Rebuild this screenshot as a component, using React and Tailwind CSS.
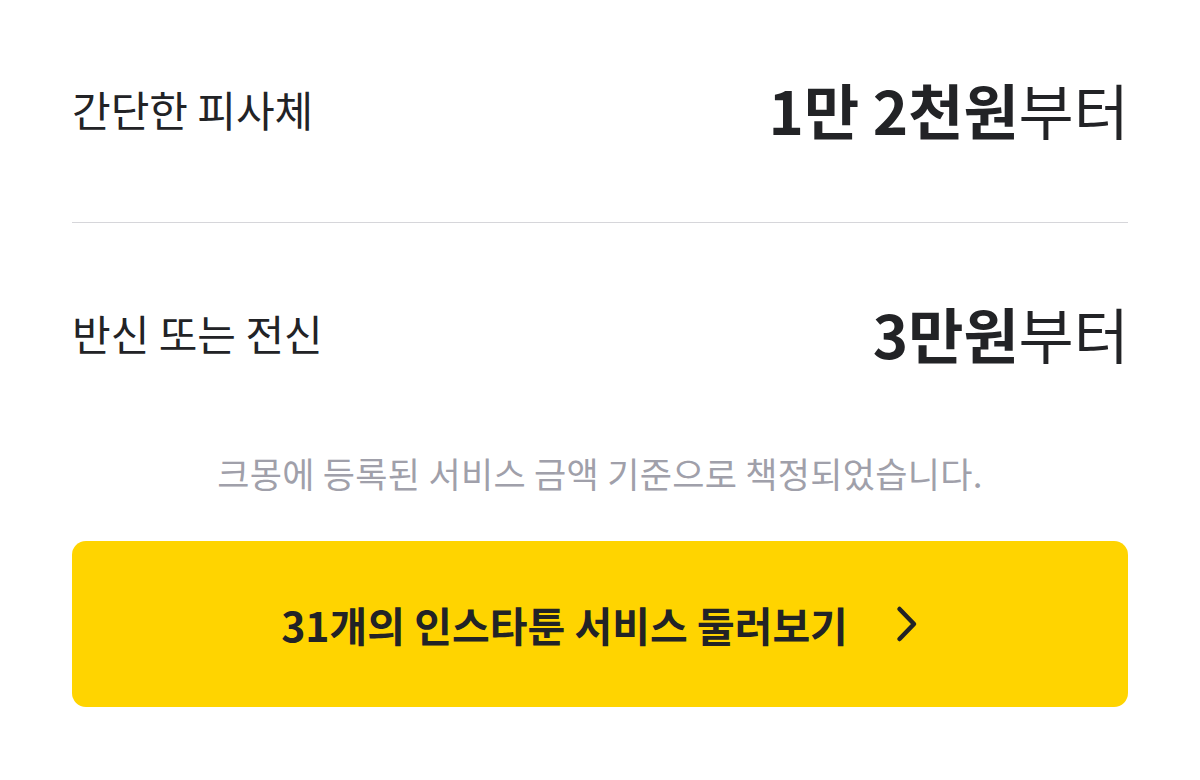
const prices = [
    { label: '간단한 피사체', amount: '1만 2천원' },
    { label: '반신 또는 전신', amount: '3만원' },
]

export default function App() {
    return (
        <div className="w-[1200px] h-[780px] bg-white px-[72px] text-[#222326] font-['Noto_Sans_CJK_KR','Noto_Sans',sans-serif]">
            {prices.map((p, i) => (
                <div
                    key={p.label}
                    className={`h-[223px] flex items-center justify-between ${i === 0 ? 'border-b border-[#d6d6da]' : ''}`}
                >
                    <span className="text-[42px] leading-none -mt-[4px]">{p.label}</span>
                    <span className="text-[60px] leading-none -mr-[1px] -mt-[4px]">
                        <b className="font-bold">{p.amount}</b>
                        <span className="font-normal">부터</span>
                    </span>
                </div>
            ))}

            <p className="mt-[9px] text-center text-[35px] tracking-[0.3px] leading-none text-[#a0a0aa]">
                크몽에 등록된 서비스 금액 기준으로 책정되었습니다.
            </p>

            <button className="mt-[51px] w-full h-[166px] rounded-[14px] bg-[#ffd400] flex items-center justify-center gap-[47px]">
                <span className="text-[41px] font-bold leading-none">31개의 인스타툰 서비스 둘러보기</span>
                <svg width="24" height="40" viewBox="0 0 24 40" fill="none" stroke="#222326" strokeWidth="4.5" strokeLinecap="round" strokeLinejoin="round">
                    <path d="M4.5 5 L19 20 L4.5 35" />
                </svg>
            </button>
        </div>
    )
}
